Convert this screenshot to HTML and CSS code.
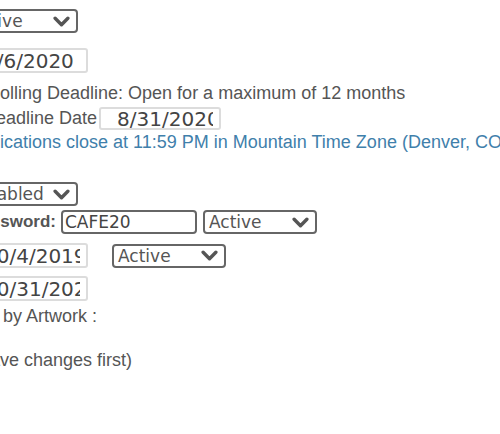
FILE: index.html
```html
<!DOCTYPE html>
<html lang="en">
<head>
    <meta charset="UTF-8">
    <title>Call Settings</title>
    <link rel="stylesheet" href="styles.css">
</head>
<body>

    <form class="call-form">
        <div class="row row-status">
            <div class="select wide">
                <span>Active</span>
                <svg class="chev" viewBox="0 0 16 10"><polyline points="2,2 8,8 14,2"/></svg>
            </div>
        </div>

        <div class="row row-open">
            <input type="text" class="date" value="1/6/2020" readonly>
        </div>

        <p class="line">Rolling Deadline: Open for a maximum of 12 months</p>

        <div class="row row-deadline">
            <label class="plain">Deadline Date</label>
            <input type="text" class="date deadline" value="8/31/2020" readonly>
        </div>

        <p class="line note">Applications close at 11:59 PM in Mountain Time Zone (Denver, CO)</p>

        <div class="row row-pass-toggle">
            <div class="select wide">
                <span>Disabled</span>
                <svg class="chev" viewBox="0 0 16 10"><polyline points="2,2 8,8 14,2"/></svg>
            </div>
        </div>

        <div class="row row-pass">
            <label class="bold">Password:</label>
            <input type="text" class="field" value="CAFE20">
            <div class="select">
                <span>Active</span>
                <svg class="chev" viewBox="0 0 16 10"><polyline points="2,2 8,8 14,2"/></svg>
            </div>
        </div>

        <div class="row row-from">
            <input type="text" class="date" value="10/4/2019" readonly>
            <div class="select">
                <span>Active</span>
                <svg class="chev" viewBox="0 0 16 10"><polyline points="2,2 8,8 14,2"/></svg>
            </div>
        </div>

        <div class="row row-to">
            <input type="text" class="date" value="10/31/2020" readonly>
        </div>

        <p class="line sort">Sort by Artwork :</p>

        <p class="line save">(Save changes first)</p>
    </form>

</body>
</html>
```

FILE: styles.css
```css
body {
    margin: 0;
    background-color: #fff;
    color: #555;
    font-family: "Liberation Sans", Arial, sans-serif;
    overflow: hidden;
}
.call-form {
    display: flex;
    flex-direction: column;
    align-items: flex-start;
    padding-top: 9px;
}
.row {
    display: flex;
    align-items: center;
}
.line {
    margin: 0;
    font-size: 18px;
    line-height: 22px;
    white-space: nowrap;
}
.select {
    box-sizing: border-box;
    width: 114px;
    height: 24px;
    border: 2px solid #666;
    border-radius: 4px;
    display: flex;
    align-items: center;
    justify-content: space-between;
    padding: 0 6px 0 4px;
    font-family: "DejaVu Sans", Verdana, sans-serif;
    font-size: 17px;
    color: #555;
}
.chev {
    width: 17px;
    height: 11px;
    fill: none;
    stroke: #555;
    stroke-width: 3.2;
    stroke-linecap: round;
    stroke-linejoin: round;
}
input {
    box-sizing: border-box;
    margin: 0;
    font-family: "DejaVu Sans", Verdana, sans-serif;
    font-size: 17px;
    color: #444;
    outline: none;
}
.date {
    width: 122px;
    height: 25px;
    padding: 1px 6px 0 16px;
    border: 2px solid #dcdcdc;
    border-radius: 3px;
    background-color: #fff;
    font-size: 20px;
}
.field {
    width: 136px;
    height: 24px;
    padding: 0 2px;
    border: 2px solid #666;
    border-radius: 4px;
}
label.plain {
    font-size: 18px;
}
label.bold {
    font-size: 17px;
    font-weight: bold;
}

.row-status { margin-left: -36px; }
.row-open { margin-left: -34px; margin-top: 15px; }
.call-form .line:nth-of-type(1) { margin-left: -13px; margin-top: 9px; }
.row-deadline { margin-left: -17px; margin-top: 3px; gap: 2px; }
.deadline { height: 23px; }
.note { margin-left: -36px; margin-top: 1px; color: #3f80ab; }
.row-pass-toggle { margin-left: -36px; margin-top: 29px; }
.row-pass { margin-left: -30px; margin-top: 4px; gap: 6px; }
.row-pass label { margin-right: -1px; }
.row-from { margin-left: -34px; margin-top: 9px; gap: 24px; }
.row-to { margin-left: -34px; margin-top: 8px; }
.sort { margin-left: -35px; margin-top: 4px; }
.save { margin-left: -28px; margin-top: 22px; }
```
